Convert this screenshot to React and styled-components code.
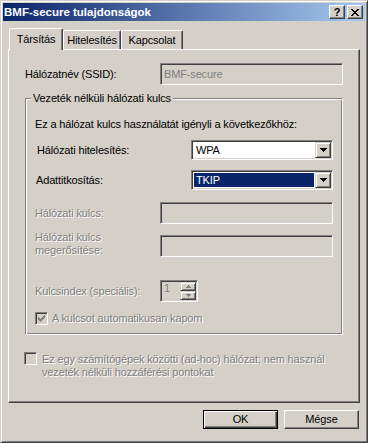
import React from "react";
import styled, { createGlobalStyle, css } from "styled-components";

const FACE = "#d4d0c8";
const SHADOW = "#808080";
const DARK = "#404040";

const Global = createGlobalStyle`
  html, body { margin: 0; padding: 0; background: ${FACE}; }
  body {
    font-family: "Liberation Sans", Arial, sans-serif;
    font-size: 11px;
    line-height: 13px;
    letter-spacing: -0.15px;
    color: #000;
  }
  * { box-sizing: border-box; }
`;

const Window = styled.div`
  width: 368px;
  height: 443px;
  background: ${FACE};
  border: 1px solid;
  border-color: ${FACE} ${DARK} ${DARK} ${FACE};
  box-shadow: inset 1px 1px #fff, inset -1px -1px ${SHADOW};
  padding: 2px;
  display: flex;
  flex-direction: column;
`;

const TitleBar = styled.div`
  height: 18px;
  display: flex;
  align-items: center;
  padding: 0 2px 0 1px;
  background: linear-gradient(to right, #0a246a, #a6caf0);
  color: #fff;
  font-weight: bold;
  font-size: 11.5px;
  letter-spacing: 0;
`;

const TitleText = styled.div`
  flex: 1;
  white-space: nowrap;
`;

const CaptionButton = styled.div`
  width: 16px;
  height: 14px;
  margin-left: ${(p) => p.$gap}px;
  background: ${FACE};
  border: 1px solid;
  border-color: #fff ${DARK} ${DARK} #fff;
  box-shadow: inset -1px -1px ${SHADOW};
  display: flex;
  align-items: center;
  justify-content: center;
  color: #000;
  font-weight: bold;
  font-size: 11px;
  line-height: 11px;
`;

const Body = styled.div`
  flex: 1;
  display: flex;
  flex-direction: column;
  padding: 0 5px 0 5px;
`;

const TabRow = styled.div`
  margin-top: 7px;
  height: 21px;
  display: flex;
  align-items: flex-start;
  padding-left: 1px;
`;

const Tab = styled.div`
  position: relative;
  width: ${(p) => p.$w}px;
  height: ${(p) => (p.$active ? 22 : 19)}px;
  margin-top: ${(p) => (p.$active ? 0 : 2)}px;
  background: ${FACE};
  border: 1px solid;
  border-bottom: none;
  border-color: #fff ${DARK} transparent #fff;
  border-radius: 2px 2px 0 0;
  box-shadow: inset -1px 0 ${SHADOW};
  display: flex;
  justify-content: center;
  padding-top: ${(p) => (p.$active ? 4 : 3)}px;
  white-space: nowrap;
  z-index: ${(p) => (p.$active ? 2 : 0)};
`;

const Panel = styled.div`
  height: 354px;
  border: 1px solid;
  border-color: #fff ${DARK} ${DARK} #fff;
  box-shadow: inset -1px -1px ${SHADOW};
  padding: 13px 16px 0 16px;
  display: flex;
  flex-direction: column;
`;

const FieldRow = styled.div`
  display: grid;
  grid-template-columns: ${(p) => p.$label}px 1fr;
  align-items: ${(p) => p.$align || "center"};
  margin-top: ${(p) => p.$mt || 0}px;
`;

const Label = styled.div`
  padding-left: ${(p) => p.$indent || 0}px;
  white-space: nowrap;
  ${(p) =>
    p.$disabled &&
    css`
      color: ${SHADOW};
      text-shadow: 1px 1px 0 #fff;
    `}
`;

const sunken = css`
  border: 1px solid;
  border-color: ${SHADOW} #fff #fff ${SHADOW};
  box-shadow: inset 1px 1px ${DARK}, inset -1px -1px ${FACE};
  padding: 1px;
`;

const Edit = styled.div`
  ${sunken};
  height: 22px;
  background: ${(p) => (p.$disabled ? FACE : "#fff")};
  display: flex;
  align-items: center;
`;

const EditText = styled.div`
  flex: 1;
  padding-left: 2px;
  color: ${(p) => (p.$disabled ? SHADOW : "#000")};
  white-space: nowrap;
`;

const Combo = styled.div`
  ${sunken};
  height: 20px;
  background: #fff;
  display: flex;
  align-items: stretch;
`;

const ComboText = styled.div`
  flex: 1;
  margin: 1px;
  padding-left: 2px;
  display: flex;
  align-items: center;
  ${(p) =>
    p.$selected &&
    css`
      background: #0a246a;
      color: #fff;
    `}
`;

const raised = css`
  background: ${FACE};
  border: 1px solid;
  border-color: ${FACE} ${DARK} ${DARK} ${FACE};
  box-shadow: inset 1px 1px #fff, inset -1px -1px ${SHADOW};
`;

const DropButton = styled.div`
  ${raised};
  width: 16px;
  display: flex;
  align-items: center;
  justify-content: center;
`;

const Group = styled.div`
  position: relative;
  margin-top: 13px;
  border: 1px solid;
  border-color: ${SHADOW} #fff #fff ${SHADOW};
  box-shadow: inset 1px 1px #fff, inset -1px -1px ${SHADOW};
  padding: 19px 9px 9px 9px;
  display: flex;
  flex-direction: column;
`;

const GroupCaption = styled.div`
  position: absolute;
  top: -7px;
  left: 5px;
  padding: 0 2px;
  background: ${FACE};
  white-space: nowrap;
`;

const Text = styled.div`
  white-space: nowrap;
`;

const Spin = styled.div`
  ${sunken};
  width: 38px;
  height: 22px;
  background: ${FACE};
  display: flex;
`;

const SpinButtons = styled.div`
  width: 16px;
  display: flex;
  flex-direction: column;
`;

const SpinButton = styled.div`
  ${raised};
  flex: 1;
  display: flex;
  align-items: center;
  justify-content: center;
`;

const CheckRow = styled.div`
  display: flex;
  align-items: flex-start;
  margin-top: ${(p) => p.$mt || 0}px;
  margin-left: ${(p) => p.$ml || 0}px;
`;

const CheckBox = styled.div`
  width: 13px;
  height: 13px;
  flex: none;
  ${sunken};
  padding: 0;
  background: ${FACE};
  display: flex;
  align-items: center;
  justify-content: center;
`;

const CheckLabel = styled.div`
  margin-left: ${(p) => p.$gap}px;
  margin-top: ${(p) => p.$top || 0}px;
  color: ${SHADOW};
  text-shadow: 1px 1px 0 #fff;
`;

const ButtonRow = styled.div`
  margin-top: 7px;
  display: flex;
  justify-content: flex-end;
  gap: 6px;
  padding-right: 1px;
`;

const PushButton = styled.div`
  width: 75px;
  height: 19px;
  display: flex;
  align-items: center;
  justify-content: center;
  background: ${FACE};
  ${(p) =>
    p.$default
      ? css`
          border: 1px solid #000;
          box-shadow: inset 1px 1px #fff, inset -1px -1px ${DARK},
            inset -2px -2px ${SHADOW};
        `
      : css`
          border: 1px solid;
          border-color: #fff ${DARK} ${DARK} #fff;
          box-shadow: inset -1px -1px ${SHADOW};
        `}
`;

const DownArrow = ({ color = "#000", small }) =>
  small ? (
    <svg width="5" height="3" viewBox="0 0 5 3" shapeRendering="crispEdges">
      <path d="M0 0h5v1H0zM1 1h3v1H1zM2 2h1v1H2z" fill={color} />
    </svg>
  ) : (
    <svg width="7" height="4" viewBox="0 0 7 4" shapeRendering="crispEdges">
      <path d="M0 0h7v1H0zM1 1h5v1H1zM2 2h3v1H2zM3 3h1v1H3z" fill={color} />
    </svg>
  );

const UpArrow = ({ color }) => (
  <svg width="5" height="3" viewBox="0 0 5 3" shapeRendering="crispEdges">
    <path d="M2 0h1v1H2zM1 1h3v1H1zM0 2h5v1H0z" fill={color} />
  </svg>
);

const CloseGlyph = () => (
  <svg width="8" height="7" viewBox="0 0 8 7" shapeRendering="crispEdges">
    <path
      d="M0 0h2v1H0zM6 0h2v1H6zM1 1h2v1H1zM5 1h2v1H5zM2 2h4v1H2zM3 3h2v1H3zM2 4h4v1H2zM1 5h2v1H1zM5 5h2v1H5zM0 6h2v1H0zM6 6h2v1H6z"
      fill="#000"
    />
  </svg>
);

const CheckMark = ({ color }) => (
  <svg width="7" height="7" viewBox="0 0 7 7" shapeRendering="crispEdges">
    <path
      d="M6 0h1v1H6zM5 1h2v1H5zM0 2h1v1H0zM4 2h3v1H4zM0 3h2v1H0zM3 3h3v1H3zM0 4h5v1H0zM1 5h3v1H1zM2 6h1v1H2z"
      fill={color}
    />
  </svg>
);

export default function App() {
  return (
    <>
      <Global />
      <Window>
        <TitleBar>
          <TitleText>BMF-secure tulajdonságok</TitleText>
          <CaptionButton $gap={0}>?</CaptionButton>
          <CaptionButton $gap={2}>
            <CloseGlyph />
          </CaptionButton>
        </TitleBar>
        <Body>
          <TabRow>
            <Tab $active $w={54}>Társítás</Tab>
            <Tab $w={58}>Hitelesítés</Tab>
            <Tab $w={62}>Kapcsolat</Tab>
          </TabRow>
          <Panel>
            <FieldRow $label={135}>
              <Label>Hálózatnév (SSID):</Label>
              <Edit $disabled>
                <EditText $disabled>BMF-secure</EditText>
              </Edit>
            </FieldRow>

            <Group>
              <GroupCaption>Vezeték nélküli hálózati kulcs</GroupCaption>
              <Text>Ez a hálózat kulcs használatát igényli a következőkhöz:</Text>

              <FieldRow $label={156} $mt={9}>
                <Label $indent={2}>Hálózati hitelesítés:</Label>
                <Combo>
                  <ComboText>WPA</ComboText>
                  <DropButton>
                    <DownArrow />
                  </DropButton>
                </Combo>
              </FieldRow>

              <FieldRow $label={156} $mt={10}>
                <Label $indent={1}>Adattitkosítás:</Label>
                <Combo>
                  <ComboText $selected>TKIP</ComboText>
                  <DropButton>
                    <DownArrow />
                  </DropButton>
                </Combo>
              </FieldRow>

              <FieldRow $label={125} $mt={12}>
                <Label $disabled>Hálózati kulcs:</Label>
                <Edit $disabled />
              </FieldRow>

              <FieldRow $label={125} $mt={7} $align="end">
                <Label $disabled>
                  Hálózati kulcs
                  <br />
                  megerősítése:
                </Label>
                <Edit $disabled />
              </FieldRow>

              <FieldRow $label={125} $mt={23}>
                <Label $disabled>Kulcsindex (speciális):</Label>
                <Spin>
                  <EditText $disabled>1</EditText>
                  <SpinButtons>
                    <SpinButton>
                      <UpArrow color={SHADOW} />
                    </SpinButton>
                    <SpinButton>
                      <DownArrow small color={SHADOW} />
                    </SpinButton>
                  </SpinButtons>
                </Spin>
              </FieldRow>

              <CheckRow $mt={10}>
                <CheckBox>
                  <CheckMark color={SHADOW} />
                </CheckBox>
                <CheckLabel $gap={4}>A kulcsot automatikusan kapom</CheckLabel>
              </CheckRow>
            </Group>

            <CheckRow $mt={17} $ml={-1}>
              <CheckBox />
              <CheckLabel $gap={5} $top={1}>
                Ez egy számítógépek közötti (ad-hoc) hálózat; nem használ
                <br />
                vezeték nélküli hozzáférési pontokat
              </CheckLabel>
            </CheckRow>
          </Panel>
          <ButtonRow>
            <PushButton $default>OK</PushButton>
            <PushButton>Mégse</PushButton>
          </ButtonRow>
        </Body>
      </Window>
    </>
  );
}
